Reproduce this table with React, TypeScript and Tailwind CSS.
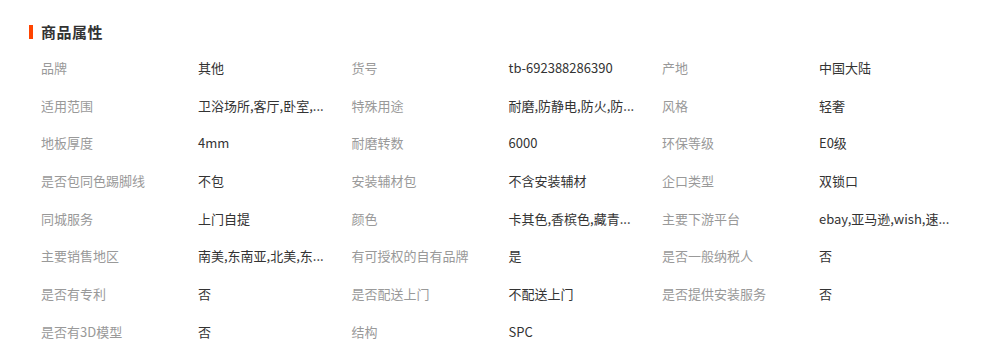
import React from "react";

const rows: [string, string][][] = [
  [["品牌", "其他"], ["货号", "tb-692388286390"], ["产地", "中国大陆"]],
  [["适用范围", "卫浴场所,客厅,卧室,..."], ["特殊用途", "耐磨,防静电,防火,防..."], ["风格", "轻奢"]],
  [["地板厚度", "4mm"], ["耐磨转数", "6000"], ["环保等级", "E0级"]],
  [["是否包同色踢脚线", "不包"], ["安装辅材包", "不含安装辅材"], ["企口类型", "双锁口"]],
  [["同城服务", "上门自提"], ["颜色", "卡其色,香槟色,藏青..."], ["主要下游平台", "ebay,亚马逊,wish,速..."]],
  [["主要销售地区", "南美,东南亚,北美,东..."], ["有可授权的自有品牌", "是"], ["是否一般纳税人", "否"]],
  [["是否有专利", "否"], ["是否配送上门", "不配送上门"], ["是否提供安装服务", "否"]],
  [["是否有3D模型", "否"], ["结构", "SPC"], ["", ""]],
];

export default function App() {
  return (
    <div
      className="w-[999px] h-[351px] bg-white overflow-hidden"
      style={{ fontFamily: '"Noto Sans CJK SC", "Noto Sans", sans-serif' }}
    >
      <div className="flex items-center pt-[25px] pl-[29px] h-[39px]">
        <div className="w-[4px] h-[14px] bg-[#ff4400]" />
        <div className="ml-[8px] text-[15px] font-bold text-[#333] leading-[14px] tracking-[0.5px]">商品属性</div>
      </div>
      <div className="pl-[41px] pt-[10px]">
        {rows.map((r, i) => (
          <div key={i} className="grid grid-cols-[157px_153.5px_157px_153.5px_157px_153.5px] h-[37.7px] items-center text-[13px] leading-[20px]">
            {r.map(([k, v], j) => (
              <React.Fragment key={j}>
                <div className="text-[#999] whitespace-nowrap">{k}</div>
                <div className="text-[#333] whitespace-nowrap">{v}</div>
              </React.Fragment>
            ))}
          </div>
        ))}
      </div>
    </div>
  );
}
